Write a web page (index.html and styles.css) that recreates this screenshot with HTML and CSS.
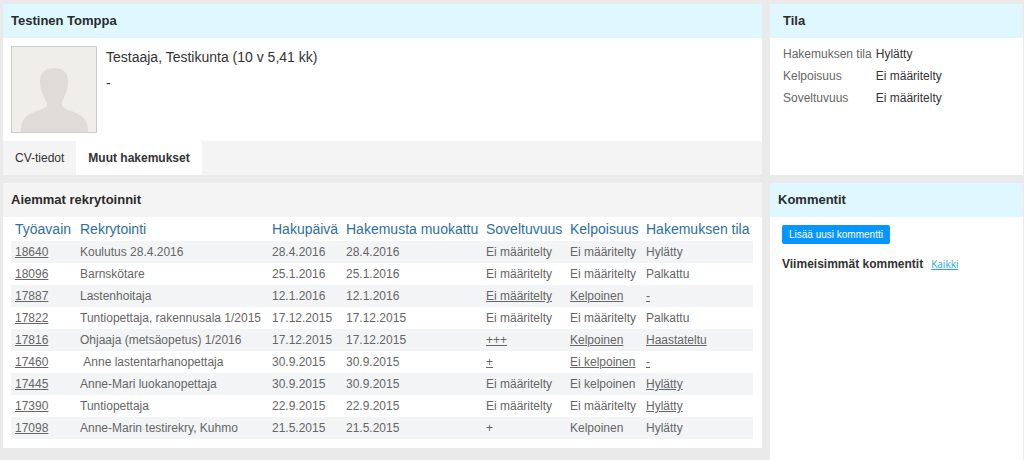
FILE: index.html
```html
<!DOCTYPE html>
<html lang="fi">
<head>
<meta charset="utf-8">
<meta name="viewport" content="width=device-width, initial-scale=1">
<title>Testinen Tomppa</title>
<link rel="stylesheet" href="styles.css">
</head>
<body>
<main class="page">
  <section class="card">
    <h1 class="card-title card-title-blue">Testinen Tomppa</h1>
    <div class="profile">
      <svg class="avatar" viewBox="0 0 84 85" role="img" aria-label="Profiilikuva">
        <path d="M9 85C9 75 11 71 18 67C25 63 33 63 35 58C36 55 33 54 31 48C29 44 28 40 28 34C28 25 34 21 42 21C50 21 56 25 56 34C56 40 55 44 53 48C51 54 49 55 50 58C52 63 59 63 66 67C73 71 76 75 76 85Z"/>
      </svg>
      <div class="profile-text">
        <p>Testaaja, Testikunta (10 v 5,41 kk)</p>
        <p>-</p>
      </div>
    </div>
    <nav class="tabs">
      <a class="tab" href="#cv">CV-tiedot</a>
      <a class="tab tab-active" href="#muut" aria-current="page">Muut hakemukset</a>
    </nav>
  </section>

  <section class="card">
    <h2 class="card-title card-title-blue title-indent">Tila</h2>
    <dl class="status">
      <dt>Hakemuksen tila</dt><dd>Hylätty</dd>
      <dt>Kelpoisuus</dt><dd>Ei määritelty</dd>
      <dt>Soveltuvuus</dt><dd>Ei määritelty</dd>
    </dl>
  </section>

  <section class="card card-top" id="muut">
    <h2 class="card-title card-title-gray">Aiemmat rekrytoinnit</h2>
    <div class="table-wrap">
      <table class="history">
        <colgroup>
          <col class="col-key"><col class="col-name"><col class="col-date"><col class="col-edited"><col class="col-fit"><col class="col-elig"><col class="col-state">
        </colgroup>
        <thead>
          <tr><th>Työavain</th><th>Rekrytointi</th><th>Hakupäivä</th><th>Hakemusta muokattu</th><th>Soveltuvuus</th><th>Kelpoisuus</th><th>Hakemuksen tila</th></tr>
        </thead>
        <tbody>
          <tr><td><a href="#18640">18640</a></td><td>Koulutus 28.4.2016</td><td>28.4.2016</td><td>28.4.2016</td><td>Ei määritelty</td><td>Ei määritelty</td><td>Hylätty</td></tr>
          <tr><td><a href="#18096">18096</a></td><td>Barnskötare</td><td>25.1.2016</td><td>25.1.2016</td><td>Ei määritelty</td><td>Ei määritelty</td><td>Palkattu</td></tr>
          <tr><td><a href="#17887">17887</a></td><td>Lastenhoitaja</td><td>12.1.2016</td><td>12.1.2016</td><td><a href="#s17887">Ei määritelty</a></td><td><a href="#k17887">Kelpoinen</a></td><td><a href="#t17887">-</a></td></tr>
          <tr><td><a href="#17822">17822</a></td><td>Tuntiopettaja, rakennusala 1/2015</td><td>17.12.2015</td><td>17.12.2015</td><td>Ei määritelty</td><td>Ei määritelty</td><td>Palkattu</td></tr>
          <tr><td><a href="#17816">17816</a></td><td>Ohjaaja (metsäopetus) 1/2016</td><td>17.12.2015</td><td>17.12.2015</td><td><a href="#s17816">+++</a></td><td><a href="#k17816">Kelpoinen</a></td><td><a href="#t17816">Haastateltu</a></td></tr>
          <tr><td><a href="#17460">17460</a></td><td>&nbsp;Anne lastentarhanopettaja</td><td>30.9.2015</td><td>30.9.2015</td><td><a href="#s17460">+</a></td><td><a href="#k17460">Ei kelpoinen</a></td><td><a href="#t17460">-</a></td></tr>
          <tr><td><a href="#17445">17445</a></td><td>Anne-Mari luokanopettaja</td><td>30.9.2015</td><td>30.9.2015</td><td>Ei määritelty</td><td>Ei kelpoinen</td><td><a href="#t17445">Hylätty</a></td></tr>
          <tr><td><a href="#17390">17390</a></td><td>Tuntiopettaja</td><td>22.9.2015</td><td>22.9.2015</td><td>Ei määritelty</td><td>Ei määritelty</td><td><a href="#t17390">Hylätty</a></td></tr>
          <tr><td><a href="#17098">17098</a></td><td>Anne-Marin testirekry, Kuhmo</td><td>21.5.2015</td><td>21.5.2015</td><td>+</td><td>Kelpoinen</td><td>Hylätty</td></tr>
        </tbody>
      </table>
    </div>
  </section>

  <section class="card">
    <h2 class="card-title card-title-blue">Kommentit</h2>
    <div class="comments">
      <button class="add-comment" type="button">Lisää uusi kommentti</button>
      <div class="latest">
        <h3 class="latest-title">Viimeisimmät kommentit</h3>
        <a class="all-link" href="#kaikki">Kaikki</a>
      </div>
    </div>
  </section>
</main>
</body>
</html>
```
FILE: styles.css
```css
* { box-sizing: border-box; }

body {
  margin: 0;
  background: #eaeaea;
  color: #333;
  font-family: "Liberation Sans", Arial, sans-serif;
  font-size: 12px;
  line-height: 16px;
}

.page {
  display: grid;
  grid-template-columns: 3fr 1fr;
  grid-template-rows: auto 1fr;
  gap: 8px;
  min-height: 100vh;
  padding: 4px 1px 0 3px;
}

.card { background: #fff; min-width: 0; }
.card-top { align-self: start; }

.card-title {
  margin: 0;
  padding: 8px;
  font-size: 13px;
  line-height: 18px;
  font-weight: bold;
  color: #2b2b2b;
}
.card-title-blue { background: #dff7ff; }
.card-title-gray { background: #f4f4f4; }
.title-indent { padding-left: 13px; }

.profile { display: flex; gap: 9px; padding: 8px; }
.avatar {
  width: 86px;
  height: 87px;
  border: 1px solid #ccc;
  background: #efeeeb;
  fill: #dfdbd8;
}
.profile-text { padding-top: 2px; font-size: 14px; }
.profile-text p { margin: 0 0 8px; line-height: 18px; }

.tabs { display: flex; background: #f4f4f4; }
.tab {
  padding: 9px 12px;
  color: #333;
  text-decoration: none;
}
.tab-active { background: #fff; font-weight: bold; }

.status {
  display: grid;
  grid-template-columns: max-content 1fr;
  column-gap: 4px;
  margin: 0;
  padding: 5px 13px;
  line-height: 22px;
}
.status dt { color: #666; }
.status dd { margin: 0; }

.table-wrap { padding: 0 9px 9px 8px; }
.history {
  width: 100%;
  border-collapse: collapse;
  table-layout: fixed;
  color: #666;
  white-space: nowrap;
}
.history th, .history td { padding: 0 4px; text-align: left; height: 22px; }
.history th {
  height: 24px;
  font-size: 14px;
  font-weight: normal;
  color: #2e6f9e;
}
.history tbody tr:nth-child(odd) { background: #f2f4f5; }
.history a { color: inherit; }
.col-key { width: 65px; }
.col-date { width: 74px; }
.col-edited { width: 140px; }
.col-fit { width: 84px; }
.col-elig { width: 76px; }
.col-state { width: 111px; }

.comments { padding: 8px 12px; }
.add-comment {
  display: block;
  height: 19px;
  padding: 0 7px;
  border: 0;
  border-radius: 2px;
  background: #0795ff;
  color: #fff;
  font-family: inherit;
  font-size: 10px;
}
.latest { display: flex; align-items: baseline; gap: 8px; margin-top: 12px; }
.latest-title { margin: 0; font-size: 12px; }
.all-link { font-family: "Open Sans", sans-serif; font-size: 10px; color: #2aa5dc; }
```
